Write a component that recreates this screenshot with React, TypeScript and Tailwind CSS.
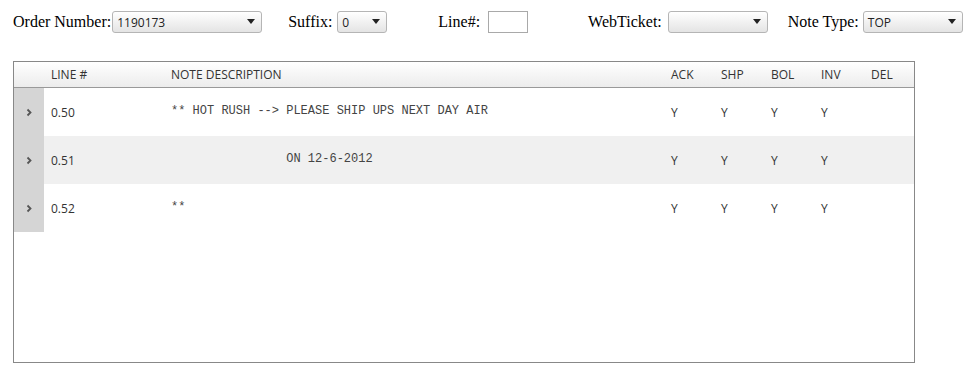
import React from 'react';

const serif = "font-['Liberation_Serif',serif]";
const ui = "font-['Open_Sans','Noto_Sans',sans-serif]";

const rows = [
    { line: '0.50', note: '** HOT RUSH --> PLEASE SHIP UPS NEXT DAY AIR', flags: ['Y', 'Y', 'Y', 'Y', ''] },
    { line: '0.51', note: '                ON 12-6-2012', flags: ['Y', 'Y', 'Y', 'Y', ''] },
    { line: '0.52', note: '**', flags: ['Y', 'Y', 'Y', 'Y', ''] },
];

const Select = ({ value, width }: { value: string; width: string }) => (
    <div className={`${width} h-[22px] flex items-center justify-between rounded-[3px] border border-[#b5b5b5] bg-gradient-to-b from-white to-[#e4e4e4] pl-[4px] pr-[6px] ${ui} text-[12px] text-[#222]`}>
        <span className="pt-[2px]">{value}</span>
        <svg width="8" height="5" viewBox="0 0 8 5"><path d="M0 0h8L4 5z" fill="#222" /></svg>
    </div>
);

const App: React.FC = () => {
    return (
        <div className="w-[969px] h-[386px] bg-white relative">
            <div className={`flex items-center h-[43px] pl-[13px] ${serif} text-[16px] text-black`}>
                <span className="mr-[1px]">Order Number:</span>
                <Select value="1190173" width="w-[150px]" />
                <span className="ml-[26px] mr-[5px]">Suffix:</span>
                <Select value="0" width="w-[50px]" />
                <span className="ml-[51px] mr-[8px]">Line#:</span>
                <div className="w-[40px] h-[22px] border border-[#a9a9a9]"></div>
                <span className="ml-[60px] mr-[6px]">WebTicket:</span>
                <Select value="" width="w-[100px]" />
                <span className="ml-[20px] mr-[4px]">Note Type:</span>
                <Select value="TOP" width="w-[100px]" />
            </div>
            <div className="ml-[13px] mt-[18px] w-[902px] h-[302px] border border-[#888] flex flex-col">
                <div className={`flex h-[26px] items-center border-b border-[#999] bg-gradient-to-b from-white to-[#ececec] ${ui} text-[12px] text-[#333]`}>
                    <div className="w-[30px]"></div>
                    <div className="w-[120px] pl-[7px]">LINE #</div>
                    <div className="w-[500px] pl-[7px]">NOTE DESCRIPTION</div>
                    {['ACK', 'SHP', 'BOL', 'INV', 'DEL'].map((h) => (
                        <div key={h} className="w-[50px] pl-[7px]">{h}</div>
                    ))}
                </div>
                {rows.map((r, i) => (
                    <div key={r.line} className={`flex h-[48px] items-center ${i === 1 ? 'bg-[#f0f0f0]' : 'bg-white'} ${ui} text-[12px] text-[#333]`}>
                        <div className="w-[30px] h-full bg-[#d5d5d5] flex items-center justify-center">
                            <svg width="7" height="9" viewBox="0 0 7 9"><path d="M1.5 1.5l3 3-3 3" stroke="#555" strokeWidth="1.8" fill="none" /></svg>
                        </div>
                        <div className="w-[120px] pl-[7px] pt-[2px]">{r.line}</div>
                        <div className="w-[500px] pl-[7px] pb-[2px] font-['Liberation_Mono',monospace] text-[12px] text-[#444] whitespace-pre">{r.note}</div>
                        {r.flags.map((f, j) => (
                            <div key={j} className="w-[50px] pl-[7px] pt-[2px]">{f}</div>
                        ))}
                    </div>
                ))}
            </div>
        </div>
    );
};

export default App;
